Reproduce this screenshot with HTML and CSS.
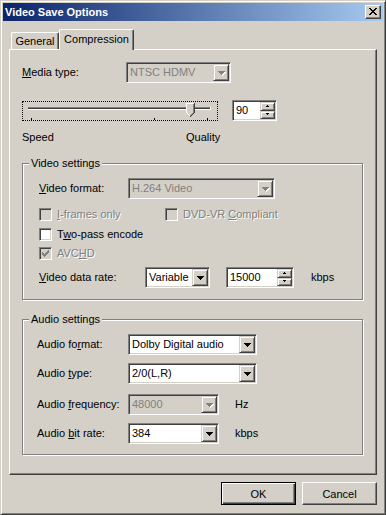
FILE: index.html
```html
<!DOCTYPE html>
<html lang="en">
<head>
  <meta charset="UTF-8">
  <title>Video Save Options</title>
  <link rel="stylesheet" href="styles.css">
</head>
<body>
  <div class="window">
    <div class="titlebar">
      <span class="title">Video Save Options</span>
      <div class="close">
        <svg width="8" height="7" viewBox="0 0 8 7" shape-rendering="crispEdges"><path fill="#000" d="M0 0h2v1H0zM6 0h2v1H6zM1 1h2v1H1zM5 1h2v1H5zM2 2h4v1H2zM3 3h2v1H3zM2 4h4v1H2zM1 5h2v1H1zM5 5h2v1H5zM0 6h2v1H0zM6 6h2v1H6z"/></svg>
      </div>
    </div>

    <div class="client">
      <div class="tabs">
        <div class="tab general">General</div>
        <div class="tab selected">Compression</div>
      </div>

      <div class="panel">
        <div class="row">
          <span class="lbl lbl-media"><u>M</u>edia type:</span>
          <div class="combo disabled combo-media">
            <span class="field">NTSC HDMV</span>
            <span class="drop"><svg width="8" height="5" viewBox="0 0 8 5" shape-rendering="crispEdges"><path fill="#fff" d="M1 1h7v1H1zM2 2h5v1H2zM3 3h3v1H3zM4 4h1v1H4z"/><path fill="#808080" d="M0 0h7v1H0zM1 1h5v1H1zM2 2h3v1H2zM3 3h1v1H3z"/></svg></span>
          </div>
        </div>

        <div class="row slider-row">
          <div class="slider">
            <svg width="194" height="18" viewBox="0 0 194 18" shape-rendering="crispEdges">
              <rect x="5" y="5" width="182" height="1" fill="#808080"/>
              <rect x="5" y="6" width="182" height="1" fill="#404040"/>
              <rect x="5" y="7" width="183" height="1" fill="#fff"/>
              <rect x="187" y="5" width="1" height="3" fill="#fff"/>
              <path fill="#d4d0c8" d="M163 1h8v10l-4 4l-4-4z"/>
              <rect x="163" y="1" width="8" height="1" fill="#fff"/>
              <rect x="163" y="1" width="1" height="10" fill="#fff"/>
              <path fill="#fff" d="M164 11h1v1h-1zM165 12h1v1h-1zM166 13h1v1h-1z"/>
              <rect x="171" y="1" width="1" height="10" fill="#404040"/>
              <rect x="170" y="2" width="1" height="9" fill="#808080"/>
              <path fill="#404040" d="M170 11h1v1h-1zM169 12h1v1h-1zM168 13h1v1h-1zM167 14h1v1h-1z"/>
              <path fill="#808080" d="M169 11h1v1h-1zM168 12h1v1h-1zM167 13h1v1h-1z"/>
              <rect x="8" y="16" width="1" height="2" fill="#000"/>
              <rect x="131" y="16" width="1" height="2" fill="#000"/>
              <rect x="184" y="16" width="1" height="2" fill="#000"/>
            </svg>
          </div>
          <div class="spin spin-quality">
            <span class="field">90</span>
            <span class="spin-btns">
              <span class="sbtn"><svg width="5" height="3" viewBox="0 0 5 3" shape-rendering="crispEdges"><path fill="#000" d="M2 0h1v1H2zM1 1h3v1H1z"/></svg></span>
              <span class="sbtn"><svg width="5" height="3" viewBox="0 0 5 3" shape-rendering="crispEdges"><path fill="#000" d="M1 0h3v1H1zM2 1h1v1H2z"/></svg></span>
            </span>
          </div>
        </div>

        <div class="row scale">
          <span class="speed">Speed</span>
          <span>Quality</span>
        </div>

        <fieldset class="group video">
          <legend>Video settings</legend>
          <div class="group-body">
            <div class="row">
              <span class="lbl lbl-video"><u>V</u>ideo format:</span>
              <div class="combo disabled combo-format">
                <span class="field">H.264 Video</span>
                <span class="drop"><svg width="8" height="5" viewBox="0 0 8 5" shape-rendering="crispEdges"><path fill="#fff" d="M1 1h7v1H1zM2 2h5v1H2zM3 3h3v1H3zM4 4h1v1H4z"/><path fill="#808080" d="M0 0h7v1H0zM1 1h5v1H1zM2 2h3v1H2zM3 3h1v1H3z"/></svg></span>
              </div>
            </div>

            <div class="row check-row first-check">
              <span class="check-item iframes">
                <span class="box disabled"></span>
                <span class="dim"><u>I</u>-frames only</span>
              </span>
              <span class="check-item">
                <span class="box disabled"></span>
                <span class="dim">DVD-VR <u>C</u>ompliant</span>
              </span>
            </div>

            <div class="row check-row twopass">
              <span class="check-item">
                <span class="box"></span>
                <span>T<u>w</u>o-pass encode</span>
              </span>
            </div>

            <div class="row check-row avchd">
              <span class="check-item">
                <span class="box disabled"><svg width="7" height="7" viewBox="0 0 7 7" shape-rendering="crispEdges"><path fill="#808080" d="M6 0h1v1H6zM5 1h2v1H5zM0 2h1v1H0zM4 2h3v1H4zM0 3h2v1H0zM3 3h3v1H3zM0 4h5v1H0zM1 5h3v1H1zM2 6h1v1H2z"/></svg></span>
                <span class="dim">AVC<u>H</u>D</span>
              </span>
            </div>

            <div class="row rate-row">
              <span class="lbl lbl-rate"><u>V</u>ideo data rate:</span>
              <div class="combo combo-rate">
                <span class="field">Variable</span>
                <span class="drop"><svg width="7" height="4" viewBox="0 0 7 4" shape-rendering="crispEdges"><path fill="#000" d="M0 0h7v1H0zM1 1h5v1H1zM2 2h3v1H2zM3 3h1v1H3z"/></svg></span>
              </div>
              <div class="spin spin-rate">
                <span class="field">15000</span>
                <span class="spin-btns">
                  <span class="sbtn"><svg width="5" height="3" viewBox="0 0 5 3" shape-rendering="crispEdges"><path fill="#000" d="M2 0h1v1H2zM1 1h3v1H1z"/></svg></span>
                  <span class="sbtn"><svg width="5" height="3" viewBox="0 0 5 3" shape-rendering="crispEdges"><path fill="#000" d="M1 0h3v1H1zM2 1h1v1H2z"/></svg></span>
                </span>
              </div>
              <span class="unit">kbps</span>
            </div>
          </div>
        </fieldset>

        <fieldset class="group audio">
          <legend>Audio settings</legend>
          <div class="group-body">
            <div class="row">
              <span class="lbl lbl-audio">Audio fo<u>r</u>mat:</span>
              <div class="combo combo-wide">
                <span class="field">Dolby Digital audio</span>
                <span class="drop"><svg width="7" height="4" viewBox="0 0 7 4" shape-rendering="crispEdges"><path fill="#000" d="M0 0h7v1H0zM1 1h5v1H1zM2 2h3v1H2zM3 3h1v1H3z"/></svg></span>
              </div>
            </div>
            <div class="row audio-type">
              <span class="lbl lbl-audio">Audio <u>t</u>ype:</span>
              <div class="combo combo-wide">
                <span class="field">2/0(L,R)</span>
                <span class="drop"><svg width="7" height="4" viewBox="0 0 7 4" shape-rendering="crispEdges"><path fill="#000" d="M0 0h7v1H0zM1 1h5v1H1zM2 2h3v1H2zM3 3h1v1H3z"/></svg></span>
              </div>
            </div>
            <div class="row audio-freq">
              <span class="lbl lbl-audio">Audio <u>f</u>requency:</span>
              <div class="combo disabled combo-small">
                <span class="field">48000</span>
                <span class="drop"><svg width="8" height="5" viewBox="0 0 8 5" shape-rendering="crispEdges"><path fill="#fff" d="M1 1h7v1H1zM2 2h5v1H2zM3 3h3v1H3zM4 4h1v1H4z"/><path fill="#808080" d="M0 0h7v1H0zM1 1h5v1H1zM2 2h3v1H2zM3 3h1v1H3z"/></svg></span>
              </div>
              <span class="unit">Hz</span>
            </div>
            <div class="row audio-bits">
              <span class="lbl lbl-audio">Audio <u>b</u>it rate:</span>
              <div class="combo combo-small">
                <span class="field">384</span>
                <span class="drop"><svg width="7" height="4" viewBox="0 0 7 4" shape-rendering="crispEdges"><path fill="#000" d="M0 0h7v1H0zM1 1h5v1H1zM2 2h3v1H2zM3 3h1v1H3z"/></svg></span>
              </div>
              <span class="unit">kbps</span>
            </div>
          </div>
        </fieldset>
      </div>

      <div class="buttons">
        <button class="btn default">OK</button>
        <button class="btn">Cancel</button>
      </div>
    </div>
  </div>
</body>
</html>
```

FILE: styles.css
```css
* {
  box-sizing: border-box;
}
html, body {
  margin: 0;
  padding: 0;
  background: #d4d0c8;
}
body {
  font-family: "Liberation Sans", Arial, sans-serif;
  font-size: 11px;
  line-height: 13px;
  color: #000;
}
svg {
  display: block;
}
u {
  text-decoration: underline;
  text-underline-offset: 1px;
}

/* window frame */
.window {
  width: 386px;
  height: 515px;
  border: 1px solid;
  border-color: #d4d0c8 #404040 #404040 #d4d0c8;
  box-shadow: inset 1px 1px #fff, inset -1px -1px #808080;
  padding: 2px;
  display: flex;
  flex-direction: column;
}
.titlebar {
  height: 18px;
  flex: none;
  background: linear-gradient(to right, #0a246a, #a6caf0);
  display: flex;
  align-items: center;
  justify-content: space-between;
  padding: 0 2px;
}
.title {
  color: #fff;
  font-weight: bold;
  font-size: 11px;
}
.close {
  width: 16px;
  height: 14px;
  background: #d4d0c8;
  border: 1px solid;
  border-color: #fff #404040 #404040 #fff;
  box-shadow: inset -1px -1px #808080;
  padding: 2px 0 0 3px;
}

.client {
  flex: 1;
  padding: 8px 6px 0 6px;
  display: flex;
  flex-direction: column;
}

/* tabs */
.tabs {
  height: 20px;
  display: flex;
  align-items: flex-end;
  padding-left: 2px;
}
.tab {
  background: #d4d0c8;
  border: 1px solid;
  border-color: #fff #404040 transparent #fff;
  border-bottom: none;
  border-radius: 2px 2px 0 0;
  box-shadow: inset -1px 0 #808080;
  display: flex;
  align-items: center;
  justify-content: center;
}
.tab.general {
  width: 48px;
  height: 17px;
  margin-bottom: 0;
  padding-top: 1px;
}
.tab.selected {
  width: 75px;
  height: 21px;
  margin-bottom: -1px;
  position: relative;
  z-index: 1;
  padding-bottom: 1px;
}

.panel {
  height: 426px;
  border: 1px solid;
  border-color: #fff #404040 #404040 #fff;
  box-shadow: inset -1px -1px #808080;
  padding: 12px 12px 0 12px;
}

.row {
  display: flex;
  align-items: center;
}
.lbl {
  flex: none;
}
.lbl-media { width: 104px; }
.lbl-video { width: 89px; }
.lbl-rate { width: 106px; }
.lbl-audio { width: 91px; }

/* combo boxes and spin edits */
.combo, .spin {
  height: 21px;
  display: flex;
  background: #fff;
  border: 1px solid;
  border-color: #808080 #fff #fff #808080;
  box-shadow: inset 1px 1px #404040, inset -1px -1px #d4d0c8;
  padding: 1px;
  flex: none;
}
.combo.disabled {
  background: #d4d0c8;
}
.field {
  flex: 1;
  padding-left: 2px;
  display: flex;
  align-items: center;
  white-space: nowrap;
  overflow: hidden;
}
.disabled .field {
  color: #808080;
}
.drop {
  width: 16px;
  flex: none;
  background: #d4d0c8;
  border: 1px solid;
  border-color: #d4d0c8 #404040 #404040 #d4d0c8;
  box-shadow: inset 1px 1px #fff, inset -1px -1px #808080;
  display: flex;
  align-items: center;
  justify-content: center;
  padding-left: 1px;
}
.disabled .drop {
  padding: 1px 0 0 2px;
}
.combo-media { width: 105px; }
.combo-format { width: 147px; }
.combo-rate { width: 65px; }
.combo-wide { width: 129px; }
.combo-small { width: 91px; }

.spin-btns {
  width: 15px;
  flex: none;
  display: flex;
  flex-direction: column;
}
.sbtn {
  flex: 1;
  background: #d4d0c8;
  border: 1px solid;
  border-color: #d4d0c8 #404040 #404040 #d4d0c8;
  box-shadow: inset 1px 1px #fff, inset -1px -1px #808080;
  display: flex;
  align-items: center;
  justify-content: center;
}
.spin-quality { width: 45px; margin-left: 14px; }
.spin-rate { width: 68px; margin-left: 16px; }
.unit {
  margin-left: 16px;
}
.rate-row .unit {
  margin-left: 17px;
}

/* slider */
.slider-row {
  margin-top: 17px;
}
.slider {
  width: 196px;
  height: 20px;
  border: 1px dotted #000;
}
.scale {
  margin-top: 10px;
}
.speed {
  width: 164px;
}

/* group boxes */
.group {
  margin: 13px 0 0 0;
  padding: 0;
  width: 341px;
  min-width: 0;
  border: 1px solid #808080;
  box-shadow: inset 1px 1px #fff, 1px 1px #fff;
}
.group legend {
  margin-left: 6px;
  padding: 0 2px;
  background: #d4d0c8;
  line-height: 13px;
}
.video .group-body {
  padding: 8px 0 11px 16px;
}
.audio .group-body {
  padding: 8px 0 10px 14px;
}

/* check boxes */
.check-row {
  height: 13px;
}
.first-check { margin-top: 9px; }
.twopass { margin-top: 7px; }
.avchd { margin-top: 6px; }
.rate-row { margin-top: 7px; }
.check-item {
  display: flex;
  align-items: center;
  gap: 5px;
}
.check-item.iframes {
  width: 126px;
}
.box {
  width: 13px;
  height: 13px;
  flex: none;
  background: #fff;
  border: 1px solid;
  border-color: #808080 #fff #fff #808080;
  box-shadow: inset 1px 1px #404040, inset -1px -1px #d4d0c8;
  padding: 2px;
}
.box.disabled {
  background: #d4d0c8;
}
.dim {
  color: #808080;
  text-shadow: 1px 1px #fff;
}

.audio-type { margin-top: 8px; }
.audio-freq { margin-top: 10px; }
.audio-bits { margin-top: 8px; }

/* buttons */
.buttons {
  display: flex;
  justify-content: flex-end;
  gap: 6px;
  margin-top: 7px;
}
.btn {
  width: 75px;
  height: 23px;
  font-family: "Liberation Sans", Arial, sans-serif;
  font-size: 11px;
  color: #000;
  background: #d4d0c8;
  border: 1px solid;
  border-color: #fff #404040 #404040 #fff;
  box-shadow: inset -1px -1px #808080;
  padding: 0;
  border-radius: 0;
}
.btn.default {
  border-color: #000;
  box-shadow: inset 1px 1px #fff, inset -1px -1px #404040, inset -2px -2px #808080;
}
```
